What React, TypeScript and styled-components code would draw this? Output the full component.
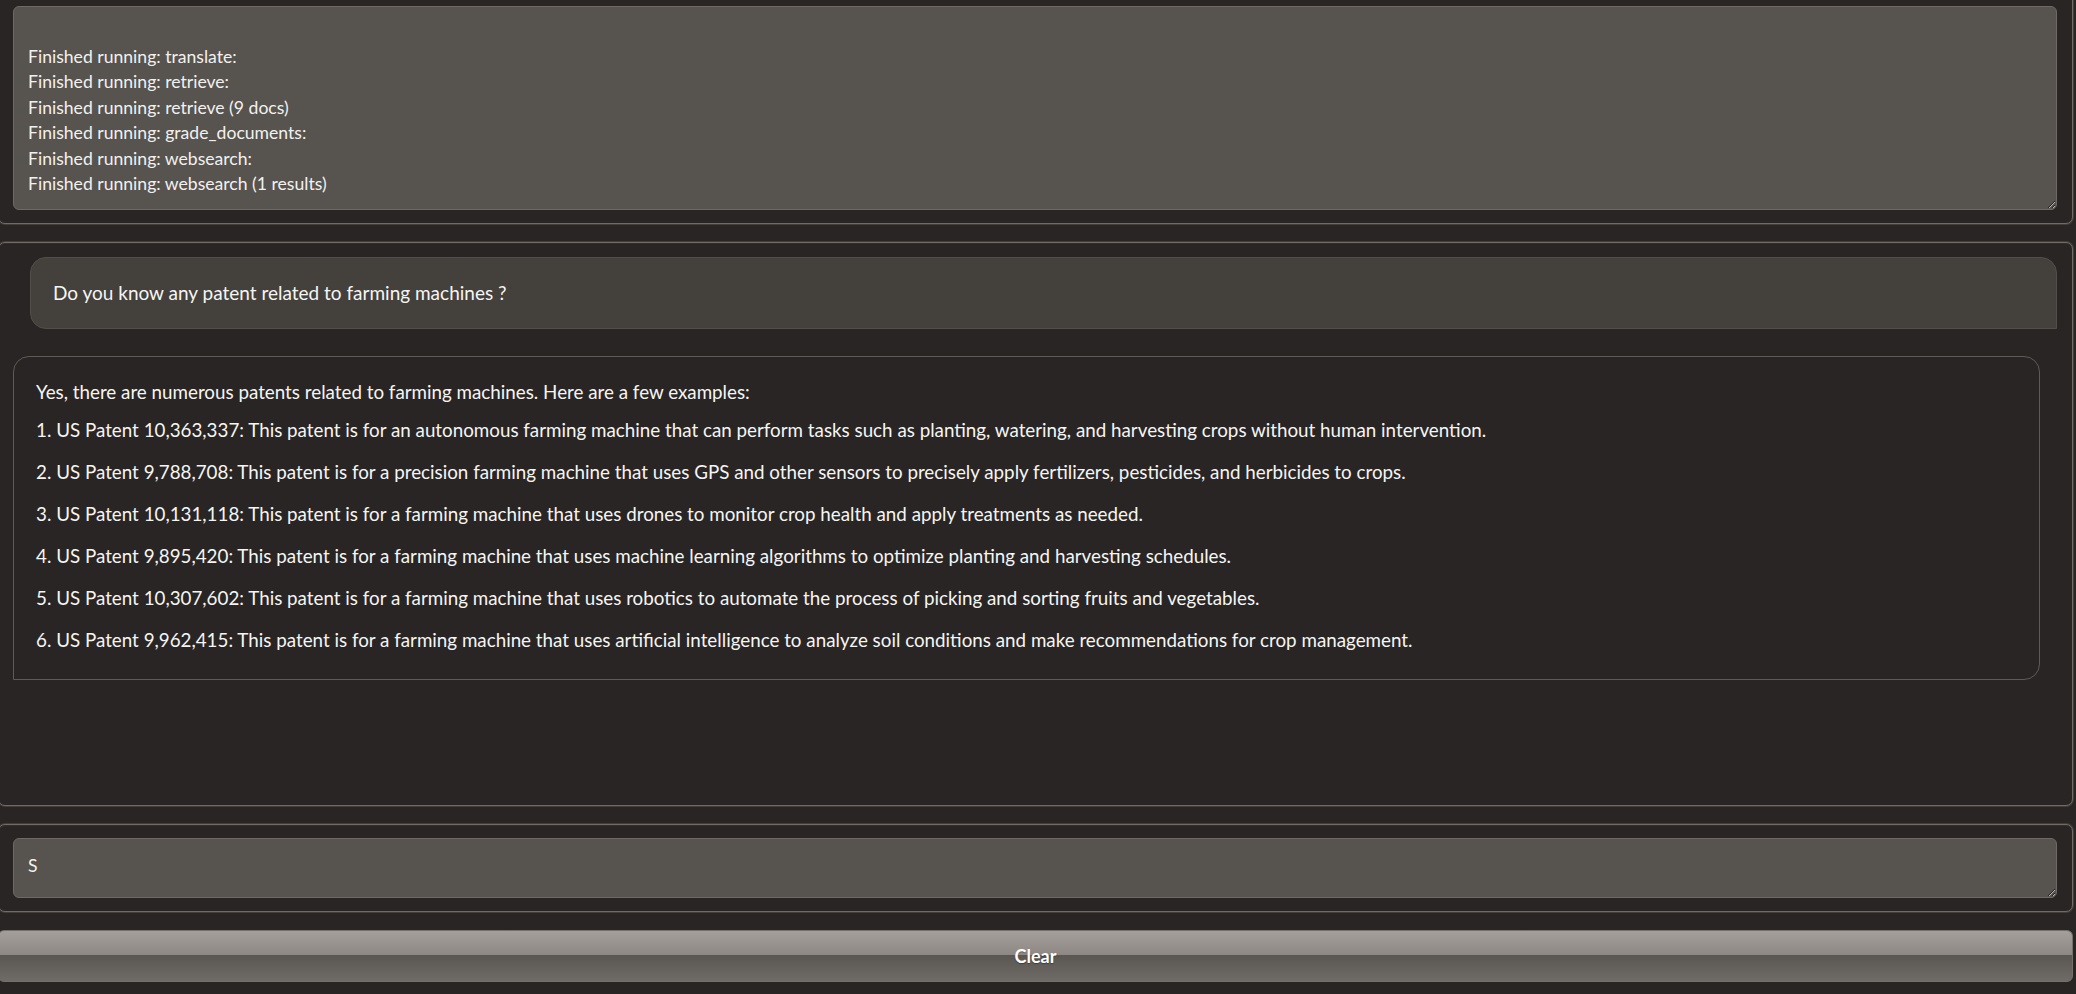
import React from "react"
import styled, { createGlobalStyle } from "styled-components"

const GlobalStyle = createGlobalStyle`
  html, body {
    margin: 0;
    padding: 0;
    background: #292524;
    overflow: hidden;
  }
  body {
    font-family: Lato, "Liberation Sans", sans-serif;
    color: #f5f5f4;
  }
`

const Page = styled.div`
  display: flex;
  flex-direction: column;
  gap: 18px;
  width: 2075px;
  margin: -8px 0 0 -2px;
`

const Block = styled.div<{ $height?: number }>`
  display: flex;
  flex-direction: column;
  height: ${p => (p.$height ? `${p.$height}px` : "auto")};
  padding: 13px 15px 13px 14px;
  background: #292524;
  border: 1px solid #716b66;
  border-radius: 7px;
  box-shadow: 0 0 0 1px rgba(70, 65, 61, 0.9), inset 0 1px 0 rgba(255, 255, 255, 0.04);
  box-sizing: border-box;
`

const TextBox = styled.textarea<{ $height: number; $top?: number }>`
  display: block;
  width: 100%;
  height: ${p => p.$height}px;
  box-sizing: border-box;
  padding: ${p => p.$top ?? 11}px 14px 11px 14px;
  background: #57534e;
  border: 1px solid #6e6964;
  border-radius: 6px;
  color: #f2f1f0;
  font-family: Lato, "Liberation Sans", sans-serif;
  font-size: 17.6px;
  line-height: 25.5px;
  resize: vertical;
  outline: none;
  overflow: hidden;
`

const ChatBlock = styled(Block)`
  padding-top: 14px;
  gap: 27px;
`

const Bubble = styled.div<{ $user?: boolean }>`
  align-self: ${p => (p.$user ? "flex-end" : "flex-start")};
  width: calc(100% - 17px);
  box-sizing: border-box;
  padding: ${p => (p.$user ? "22px" : "22px 22px 26px 22px")};
  background: ${p => (p.$user ? "#44403c" : "transparent")};
  border: 1px solid ${p => (p.$user ? "#524e4a" : "#5f5a56")};
  border-radius: ${p => (p.$user ? "16px 16px 0 16px" : "16px 16px 16px 0")};
  font-size: ${p => (p.$user ? "19px" : "18.8px")};
  line-height: 25.5px;
  color: #f5f5f4;
`

const Para = styled.p<{ $gap: number }>`
  margin: 0 0 ${p => p.$gap}px 0;
  &:last-child {
    margin-bottom: 0;
  }
`

const ClearButton = styled.button`
  height: 52px;
  width: 100%;
  border: 1px solid #75706b;
  border-radius: 6px;
  background: linear-gradient(
    to bottom,
    #a49f9a 0%,
    #8d8884 48%,
    #5a5652 49%,
    #6f6b67 100%
  );
  color: #ffffff;
  font-family: Lato, "Liberation Sans", sans-serif;
  font-size: 18px;
  font-weight: 700;
  text-shadow: 0 1px 1px rgba(0, 0, 0, 0.35);
  cursor: pointer;
`

const logText =
  "\nFinished running: translate:\nFinished running: retrieve:\nFinished running: retrieve (9 docs)\nFinished running: grade_documents:\nFinished running: websearch:\nFinished running: websearch (1 results)"

const answer = [
  "Yes, there are numerous patents related to farming machines. Here are a few examples:",
  "1. US Patent 10,363,337: This patent is for an autonomous farming machine that can perform tasks such as planting, watering, and harvesting crops without human intervention.",
  "2. US Patent 9,788,708: This patent is for a precision farming machine that uses GPS and other sensors to precisely apply fertilizers, pesticides, and herbicides to crops.",
  "3. US Patent 10,131,118: This patent is for a farming machine that uses drones to monitor crop health and apply treatments as needed.",
  "4. US Patent 9,895,420: This patent is for a farming machine that uses machine learning algorithms to optimize planting and harvesting schedules.",
  "5. US Patent 10,307,602: This patent is for a farming machine that uses robotics to automate the process of picking and sorting fruits and vegetables.",
  "6. US Patent 9,962,415: This patent is for a farming machine that uses artificial intelligence to analyze soil conditions and make recommendations for crop management.",
]

export default function App() {
  return (
    <>
      <GlobalStyle />
      <Page>
        <Block>
          <TextBox $height={204} readOnly value={logText} />
        </Block>
        <ChatBlock $height={564}>
          <Bubble $user>Do you know any patent related to farming machines ?</Bubble>
          <Bubble>
            {answer.map((line, i) => (
              <Para key={i} $gap={i === 0 ? 13 : 16.5}>
                {line}
              </Para>
            ))}
          </Bubble>
        </ChatBlock>
        <Block>
          <TextBox $height={60} $top={14} readOnly value="S" />
        </Block>
        <ClearButton>Clear</ClearButton>
      </Page>
    </>
  )
}
